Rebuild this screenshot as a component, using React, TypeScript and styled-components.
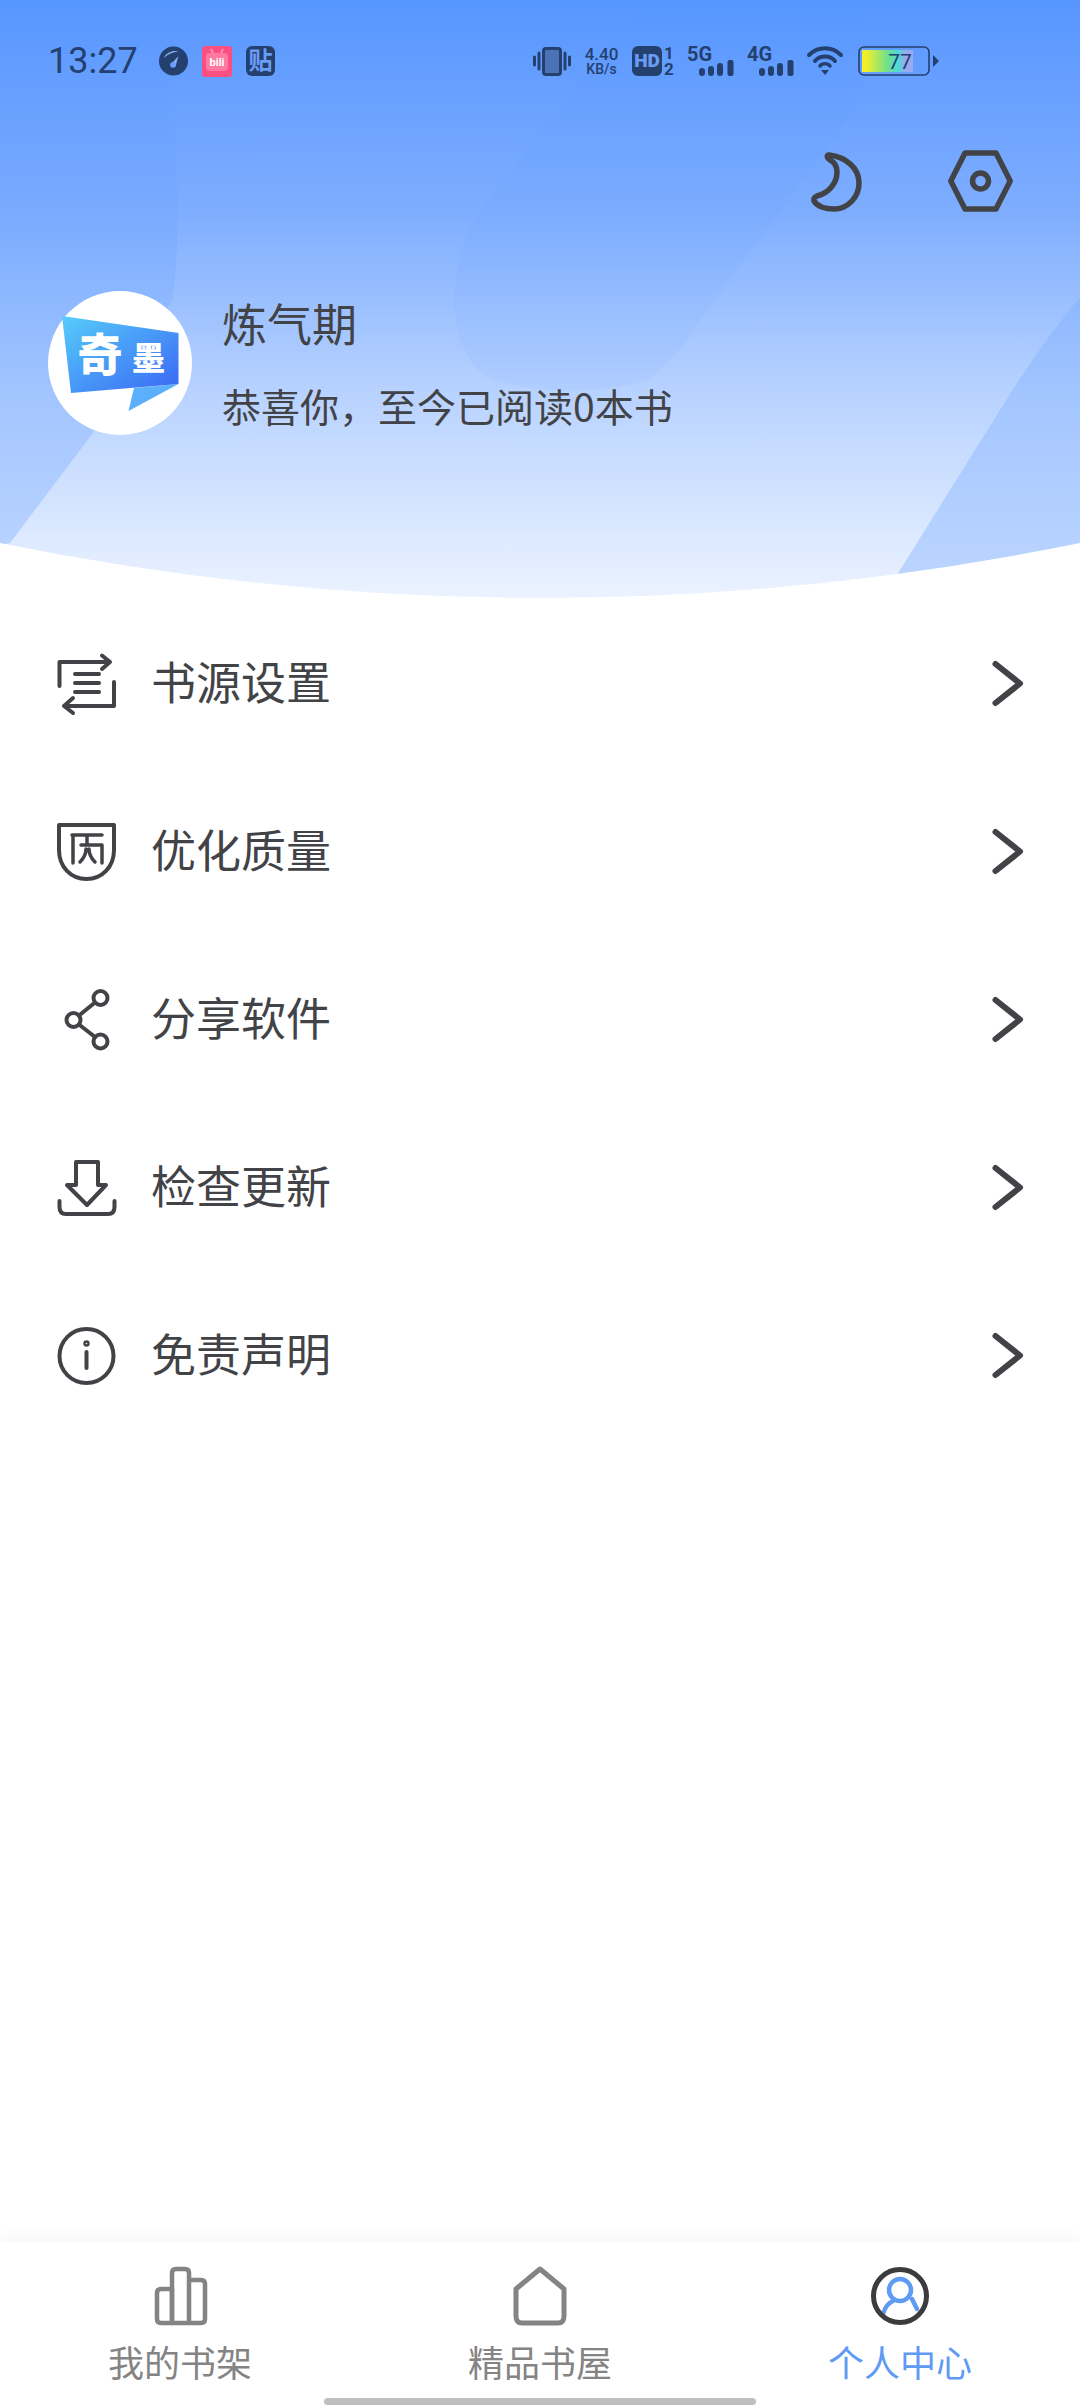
import type { ReactNode } from 'react';
import styled, { createGlobalStyle } from 'styled-components';

const INK = '#424347';
const STATUS = '#24406e';
const BLUE = '#5f9bf5';

const GlobalStyle = createGlobalStyle`
  html, body {
    margin: 0;
    padding: 0;
    background: #fff;
  }
  * {
    box-sizing: border-box;
  }
  svg {
    overflow: visible;
  }
  body {
    font-family: "Noto Sans CJK SC", "Noto Sans", sans-serif;
  }
`;

// 状态栏图标
const GaugeIcon = () => (
  <svg width="29" height="30" viewBox="0 0 30 30">
    <circle cx="15" cy="15" r="15" fill={STATUS} />
    <path d="M5 12 C8 6 14 4 20 5 C14 6 9 8 5 12 Z" fill="#8db4f8" />
    <path d="M12 19 L20 10 L17 21 Z" fill="#8db4f8" />
    <circle cx="14.5" cy="19" r="3" fill="#6a9df5" />
  </svg>
);

const BiliIcon = () => (
  <svg width="30" height="31" viewBox="0 0 30 31">
    <rect width="30" height="31" rx="3" fill="#fb4f82" />
    <rect x="4" y="7" width="22" height="18" rx="4" fill="#ff7aa3" />
    <path d="M11 7 L9 3 M19 7 L21 3" stroke="#ff8fb2" strokeWidth="2" />
    <text x="15" y="20" textAnchor="middle" fontSize="11" fontWeight="700" fill="#fff" fontFamily="Roboto, sans-serif">
      bili
    </text>
  </svg>
);

const TieIcon = () => (
  <svg width="29" height="30" viewBox="0 0 29 30">
    <rect width="29" height="30" rx="6" fill={STATUS} />
    <text x="14.5" y="23" textAnchor="middle" fontSize="24" fontWeight="700" fill="#6a9df5" fontFamily="'Noto Sans CJK SC', sans-serif">
      贴
    </text>
  </svg>
);

const VibrateIcon = () => (
  <svg width="38" height="30" viewBox="0 0 38 30">
    <rect x="10.5" y="2.5" width="17" height="26" rx="2.5" fill="#4a72b5" stroke={STATUS} strokeWidth="3" />
    <path d="M6 7 V23 M32 7 V23 M1.5 11 V19 M36.5 11 V19" stroke={STATUS} strokeWidth="3" strokeLinecap="round" />
  </svg>
);

const HdIcon = () => (
  <svg width="42" height="30" viewBox="0 0 42 30">
    <rect width="30" height="30" rx="6" fill={STATUS} />
    <text x="15" y="21" textAnchor="middle" fontSize="19" fontWeight="900" fill="#6a9df5" fontFamily="Roboto, sans-serif">
      HD
    </text>
    <text x="37" y="13" textAnchor="middle" fontSize="17" fontWeight="700" fill={STATUS} fontFamily="Roboto, sans-serif">
      1
    </text>
    <text x="37" y="29" textAnchor="middle" fontSize="17" fontWeight="700" fill={STATUS} fontFamily="Roboto, sans-serif">
      2
    </text>
  </svg>
);

const SignalIcon = ({ label }: { label: string }) => (
  <svg width="47" height="30" viewBox="0 0 47 30">
    <text x="0" y="15" fontSize="20" fontWeight="700" fill={STATUS} fontFamily="Roboto, sans-serif">
      {label}
    </text>
    <rect x="12" y="22" width="6" height="8" rx="3" fill={STATUS} />
    <rect x="21" y="20" width="6" height="10" rx="3" fill={STATUS} />
    <rect x="30" y="17" width="6" height="13" rx="3" fill={STATUS} />
    <rect x="40.5" y="14" width="6" height="16" rx="2" fill={STATUS} />
  </svg>
);

const WifiIcon = () => (
  <svg width="36" height="30" viewBox="0 0 36 30">
    <path d="M2 9 C11 0 25 0 34 9" fill="none" stroke={STATUS} strokeWidth="4" strokeLinecap="round" />
    <path d="M8 15 C13 9 23 9 28 15" fill="none" stroke={STATUS} strokeWidth="4" strokeLinecap="round" />
    <path d="M13 20 C15 17 21 17 23 20" fill="none" stroke={STATUS} strokeWidth="3.5" strokeLinecap="round" />
    <path d="M14 24 H22 L18 29 Z" fill={STATUS} />
  </svg>
);

const BatteryIcon = () => (
  <svg width="83" height="30" viewBox="-2 0 83 30">
    <defs>
      <linearGradient id="batteryFill" x1="0" x2="1" y1="0" y2="0">
        <stop offset="0.08" stopColor="#f1ee2a" />
        <stop offset="0.5" stopColor="#6fe08c" />
        <stop offset="0.72" stopColor="#4fd8da" />
        <stop offset="0.85" stopColor="#9aa9ef" />
      </linearGradient>
    </defs>
    <rect x="1" y="1" width="70" height="28" rx="5" fill="none" stroke={STATUS} strokeWidth="1.6" />
    <rect x="4" y="4" width="51" height="22" fill="url(#batteryFill)" />
    <text x="42" y="23" textAnchor="middle" fontSize="21" fill={STATUS} fontFamily="Roboto, sans-serif">
      77
    </text>
    <path d="M75 9 L81 15 L75 21 Z" fill={STATUS} />
  </svg>
);

// 顶部按钮
const MoonIcon = () => (
  <svg width="52" height="62" viewBox="0 0 52 62" fill="none" stroke={INK} strokeWidth="5.5" strokeLinejoin="round">
    <path d="M19 5 C36 7 49 18 49 33 C49 48 37 59 24 59 C15 59 7 56 4 51 C3 48 5 47 7 46 C19 43 27 33 27 22 C27 16 24 12 20 10 C17 8 16 5 19 5 Z" />
  </svg>
);

const HexIcon = () => (
  <svg width="65" height="62" viewBox="0 0 65 62" fill="none" stroke={INK} strokeWidth="5.5" strokeLinejoin="round">
    <path d="M2.8 31 L17 3 H48 L62.2 31 L48 59 H17 Z" />
    <circle cx="32.5" cy="31" r="8" />
  </svg>
);

const Logo = () => (
  <svg width="144" height="144" viewBox="0 0 144 144">
    <defs>
      <linearGradient id="logoFill" x1="0" x2="1" y1="0" y2="1">
        <stop offset="0" stopColor="#56cdfb" />
        <stop offset="1" stopColor="#3a66f4" />
      </linearGradient>
    </defs>
    <circle cx="72" cy="72" r="72" fill="#fff" />
    <path d="M86 97 L130.5 93 L80.5 120 Z" fill="#5cb0fb" />
    <path d="M14 25 L130.5 42 V93 L23 102 Z" fill="url(#logoFill)" />
    <text x="52" y="81" textAnchor="middle" fontSize="45" fontWeight="900" fill="#fff" fontFamily="'Noto Sans CJK SC', sans-serif">
      奇
    </text>
    <text x="100.5" y="79" textAnchor="middle" fontSize="33" fontWeight="900" fill="#fff" fontFamily="'Noto Sans CJK SC', sans-serif">
      墨
    </text>
  </svg>
);

// 菜单图标
const MenuGlyph = ({ children }: { children: ReactNode }) => (
  <svg width="60" height="60" viewBox="0 0 60 60" fill="none" stroke={INK} strokeWidth="4" strokeLinecap="round" strokeLinejoin="round">
    {children}
  </svg>
);

const SourceIcon = () => (
  <MenuGlyph>
    <path d="M3.5 32 V8 H54 M46 1.5 L54 8 L46 15" />
    <path d="M58 28 V52 H8 M17 44 L8 52 L17 59" />
    <path d="M19 20 H43 M19 29 H43 M19 38 H43" />
  </MenuGlyph>
);

const QualityIcon = () => (
  <MenuGlyph>
    <path d="M3 3 H58 V28 C58 45 46 57 30.5 57 C15 57 3 45 3 28 Z" />
    <path d="M16 13 H46 M17 13 V41 M25 23 H46 V41 M31 13 V23" strokeWidth="3.5" />
    <path d="M30 27 C30 33 28 36 24 40 M33 27 C33 33 35 36 39 40" strokeWidth="3.5" />
  </MenuGlyph>
);

const ShareIcon = () => (
  <MenuGlyph>
    <circle cx="44.5" cy="8" r="7" />
    <circle cx="17.5" cy="30" r="7" />
    <circle cx="44.5" cy="51.5" r="7" />
    <path d="M23 25.5 L39 12.5 M23 34.5 L39 47" />
  </MenuGlyph>
);

const UpdateIcon = () => (
  <MenuGlyph>
    <path d="M20 27 V4 H42 V27 H50 L31 47 L11 27 Z" />
    <path d="M3.5 43 V49 C3.5 54 6 56 10 56 H52 C56 56 58.5 54 58.5 49 V43" />
  </MenuGlyph>
);

const InfoIcon = () => (
  <MenuGlyph>
    <circle cx="30.5" cy="30" r="27" />
    <path d="M30.5 26 V42" />
    <circle cx="30.5" cy="17.5" r="1.2" />
  </MenuGlyph>
);

const Chevron = () => (
  <svg width="34" height="46" viewBox="0 0 34 46" fill="none" stroke={INK} strokeWidth="6" strokeLinecap="round" strokeLinejoin="round">
    <path d="M6.5 3 L31 22.5 L6.5 42" />
  </svg>
);

// 底部标签图标
const ShelfIcon = () => (
  <svg width="60" height="60" viewBox="0 0 60 60" fill="none" stroke="#848484" strokeWidth="4.5" strokeLinejoin="round">
    <path d="M7 27 C7 24 9 23 11 23 H22 V57 H11 C9 57 7 56 7 53 Z" />
    <path d="M22 57 V7 C22 4 24 3 26 3 H35 C37 3 39 4 39 7 V57 Z" />
    <path d="M39 14 H51 C53 14 55 15 55 18 V53 C55 56 53 57 51 57 H39" />
  </svg>
);

const StoreIcon = () => (
  <svg width="60" height="60" viewBox="0 0 60 60" fill="none" stroke="#848484" strokeWidth="5" strokeLinejoin="round">
    <path d="M30 3 L54 23 V50 C54 55 52 57 48 57 H12 C8 57 6 55 6 50 V23 Z" />
  </svg>
);

const ProfileIcon = () => (
  <svg width="60" height="60" viewBox="0 0 60 60" fill="none" strokeLinecap="round">
    <circle cx="30" cy="24" r="11" stroke={BLUE} strokeWidth="4.5" />
    <path d="M13 48 C15 41 18 37 23 35" stroke={BLUE} strokeWidth="4.5" />
    <path d="M42 33 L47 43" stroke={BLUE} strokeWidth="4.5" />
    <circle cx="30" cy="30" r="26.5" stroke="#3c3c3e" strokeWidth="5" />
  </svg>
);

const MENU_ITEMS = [
  { label: '书源设置', icon: <SourceIcon /> },
  { label: '优化质量', icon: <QualityIcon /> },
  { label: '分享软件', icon: <ShareIcon /> },
  { label: '检查更新', icon: <UpdateIcon /> },
  { label: '免责声明', icon: <InfoIcon /> },
];

const TABS = [
  { label: '我的书架', icon: <ShelfIcon />, active: false },
  { label: '精品书屋', icon: <StoreIcon />, active: false },
  { label: '个人中心', icon: <ProfileIcon />, active: true },
];

const App = () => {
  return (
    <St.Page>
      <GlobalStyle />
      <St.Hero>
        <St.HeroBackdrop viewBox="0 0 1080 600" aria-hidden="true">
          <defs>
            <linearGradient id="bandFill" gradientUnits="userSpaceOnUse" x1="0" x2="0" y1="0" y2="600">
              <stop offset="0" stopColor="#5a98ff" stopOpacity="0.04" />
              <stop offset="0.5" stopColor="#5a98ff" stopOpacity="0.2" />
              <stop offset="1" stopColor="#5a98ff" stopOpacity="0.32" />
            </linearGradient>
          </defs>
          <path d="M0 0 H160 C178 100 182 250 172 300 L93 433 L10 543 L0 545 Z" fill="url(#bandFill)" />
          <path d="M640 0 C630 40 600 60 585 75 C540 140 480 200 465 240 C448 290 450 340 480 372 C510 395 610 395 647 380 C670 365 690 336 700 320 L854 110 C865 70 870 30 865 0 Z" fill="#5a98ff" fillOpacity="0.07" />
          <path d="M895 578 L1000 410 Q1040 345 1080 297 V600 H895 Z" fill="url(#bandFill)" />
          <path d="M0 543 Q540 653 1080 543 V600 H0 Z" fill="#fff" />
        </St.HeroBackdrop>

        <St.StatusBar>
          <St.StatusGroup $gap={14}>
            <St.Time>13:27</St.Time>
            <GaugeIcon />
            <BiliIcon />
            <TieIcon />
          </St.StatusGroup>
          <St.StatusGroup $gap={13}>
            <VibrateIcon />
            <St.Speed>
              <St.SpeedValue>4.40</St.SpeedValue>
              <St.SpeedUnit>KB/s</St.SpeedUnit>
            </St.Speed>
            <HdIcon />
            <SignalIcon label="5G" />
            <SignalIcon label="4G" />
            <WifiIcon />
            <BatteryIcon />
          </St.StatusGroup>
        </St.StatusBar>

        <St.ActionBar>
          <MoonIcon />
          <HexIcon />
        </St.ActionBar>

        <St.Profile>
          <Logo />
          <St.ProfileText>
            <St.Name>炼气期</St.Name>
            <St.Summary>恭喜你，至今已阅读0本书</St.Summary>
          </St.ProfileText>
        </St.Profile>
      </St.Hero>

      <St.Menu>
        {MENU_ITEMS.map(({ label, icon }) => (
          <St.MenuRow key={label}>
            {icon}
            <St.MenuLabel>{label}</St.MenuLabel>
            <Chevron />
          </St.MenuRow>
        ))}
      </St.Menu>

      <St.TabBar>
        <St.TabRow>
          {TABS.map(({ label, icon, active }) => (
            <St.Tab key={label}>
              {icon}
              <St.TabLabel $active={active}>{label}</St.TabLabel>
            </St.Tab>
          ))}
        </St.TabRow>
        <St.HomeBar />
      </St.TabBar>
    </St.Page>
  );
};

export default App;

const St = {
  Page: styled.div`
    display: flex;
    flex-direction: column;

    width: 1080px;
    height: 2408px;
    overflow: hidden;

    background: #fff;
  `,

  Hero: styled.header`
    position: relative;
    isolation: isolate;

    display: flex;
    flex-direction: column;

    height: 600px;
    padding-top: 46px;

    background: linear-gradient(180deg, #5796ff 0%, #7eadff 35%, #b9d3ff 66%, #ecf3ff 100%);
  `,

  HeroBackdrop: styled.svg`
    position: absolute;
    inset: 0;
    z-index: -1;

    width: 1080px;
    height: 600px;
  `,

  StatusBar: styled.div`
    display: flex;
    justify-content: space-between;
    align-items: center;

    height: 30px;
    padding: 0 141px 0 48px;
  `,

  StatusGroup: styled.div<{ $gap: number }>`
    display: flex;
    align-items: center;
    gap: ${({ $gap }) => $gap}px;
  `,

  Time: styled.span`
    margin-right: 7px;

    color: ${STATUS};
    font-family: Roboto, sans-serif;
    font-size: 36px;
    line-height: 30px;
  `,

  Speed: styled.div`
    display: flex;
    flex-direction: column;
    align-items: center;

    width: 35px;
    color: ${STATUS};
    font-family: Roboto, sans-serif;
    font-weight: 500;
  `,

  SpeedValue: styled.span`
    font-size: 17px;
    line-height: 16px;
  `,

  SpeedUnit: styled.span`
    font-size: 14px;
    line-height: 14px;
  `,

  ActionBar: styled.div`
    display: flex;
    justify-content: flex-end;
    gap: 86px;

    margin-top: 74px;
    padding-right: 67px;
  `,

  Profile: styled.section`
    display: flex;
    gap: 30px;

    margin-top: 79px;
    padding-left: 48px;
  `,

  ProfileText: styled.div`
    display: flex;
    flex-direction: column;
    gap: 38px;

    padding-top: 10px;
  `,

  Name: styled.h1`
    margin: 0;

    color: ${INK};
    font-size: 45px;
    font-weight: 400;
    line-height: 44px;
  `,

  Summary: styled.p`
    margin: 0;

    color: ${INK};
    font-size: 39px;
    line-height: 44px;
  `,

  Menu: styled.nav`
    display: flex;
    flex-direction: column;
  `,

  MenuRow: styled.div`
    display: flex;
    align-items: center;
    gap: 35px;

    height: 168px;
    padding: 0 57px 0 56px;
  `,

  MenuLabel: styled.span`
    flex: 1;
    margin-bottom: 7px;

    color: ${INK};
    font-size: 45px;
    line-height: 60px;
  `,

  TabBar: styled.footer`
    display: flex;
    flex-direction: column;
    align-items: center;

    margin-top: auto;
    height: 166px;
    padding-top: 24px;

    background: #fff;
    box-shadow: 0 -6px 14px rgba(0, 0, 0, 0.035);
  `,

  TabRow: styled.div`
    display: grid;
    grid-template-columns: repeat(3, 1fr);

    width: 100%;
  `,

  Tab: styled.div`
    display: flex;
    flex-direction: column;
    align-items: center;
    gap: 17px;
  `,

  TabLabel: styled.span<{ $active: boolean }>`
    color: ${({ $active }) => ($active ? BLUE : '#848484')};
    font-size: 36px;
    line-height: 36px;
  `,

  HomeBar: styled.div`
    width: 432px;
    height: 7px;
    margin-top: 19px;

    border-radius: 4px;
    background: #bfbfbf;
  `,
};
